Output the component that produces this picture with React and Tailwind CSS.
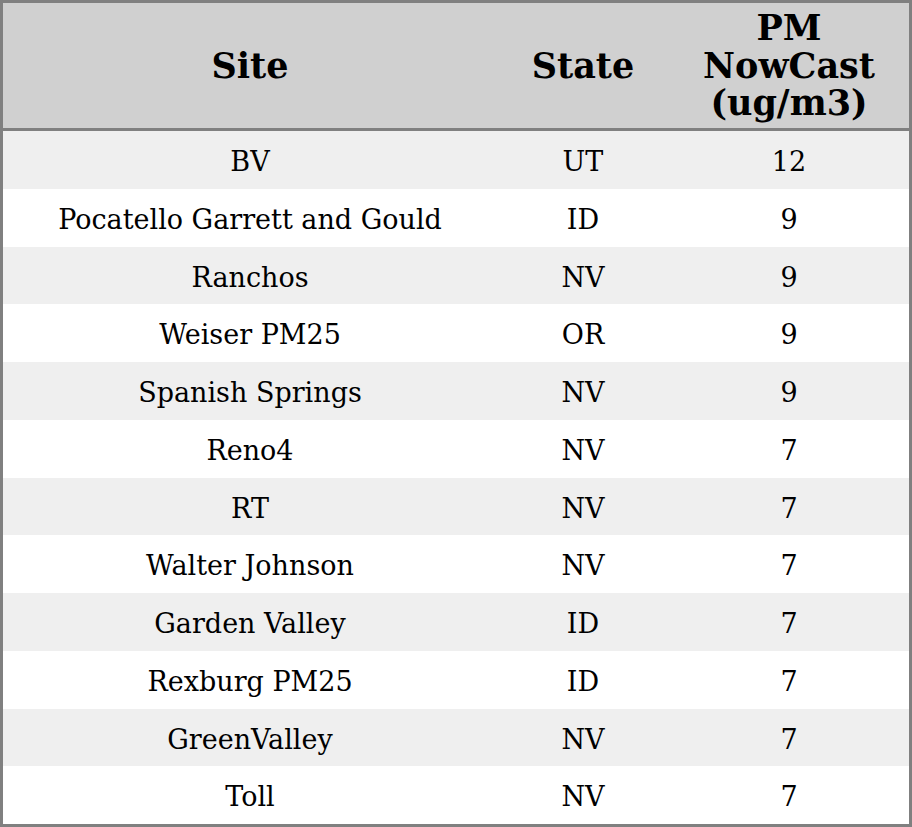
const rows = [
  ["BV", "UT", "12"],
  ["Pocatello Garrett and Gould", "ID", "9"],
  ["Ranchos", "NV", "9"],
  ["Weiser PM25", "OR", "9"],
  ["Spanish Springs", "NV", "9"],
  ["Reno4", "NV", "7"],
  ["RT", "NV", "7"],
  ["Walter Johnson", "NV", "7"],
  ["Garden Valley", "ID", "7"],
  ["Rexburg PM25", "ID", "7"],
  ["GreenValley", "NV", "7"],
  ["Toll", "NV", "7"],
];

export default function App() {
  return (
    <div className="w-[912px] h-[827px] bg-white border-[3px] border-[#808080] font-['DejaVu_Serif',serif] text-black flex flex-col">
      {/* header */}
      <div className="h-[125px] bg-[#d0d0d0] border-b-[3px] border-[#808080] box-content flex items-center text-[35px] font-bold leading-[37.5px] text-center">
        <div className="w-[494px]">Site</div>
        <div className="w-[172px]">State</div>
        <div className="flex-1">
          PM
          <br />
          NowCast
          <br />
          (ug/m3)
        </div>
      </div>

      {/* rows */}
      {rows.map((r, i) => (
        <div
          key={i}
          className={
            (i % 2 === 0 ? "bg-[#efefef]" : "bg-white") +
            " h-[57.75px] pt-[5px] flex items-center text-[27px] text-center"
          }
        >
          <div className="w-[494px]">{r[0]}</div>
          <div className="w-[172px]">{r[1]}</div>
          <div className="flex-1">{r[2]}</div>
        </div>
      ))}
    </div>
  );
}
